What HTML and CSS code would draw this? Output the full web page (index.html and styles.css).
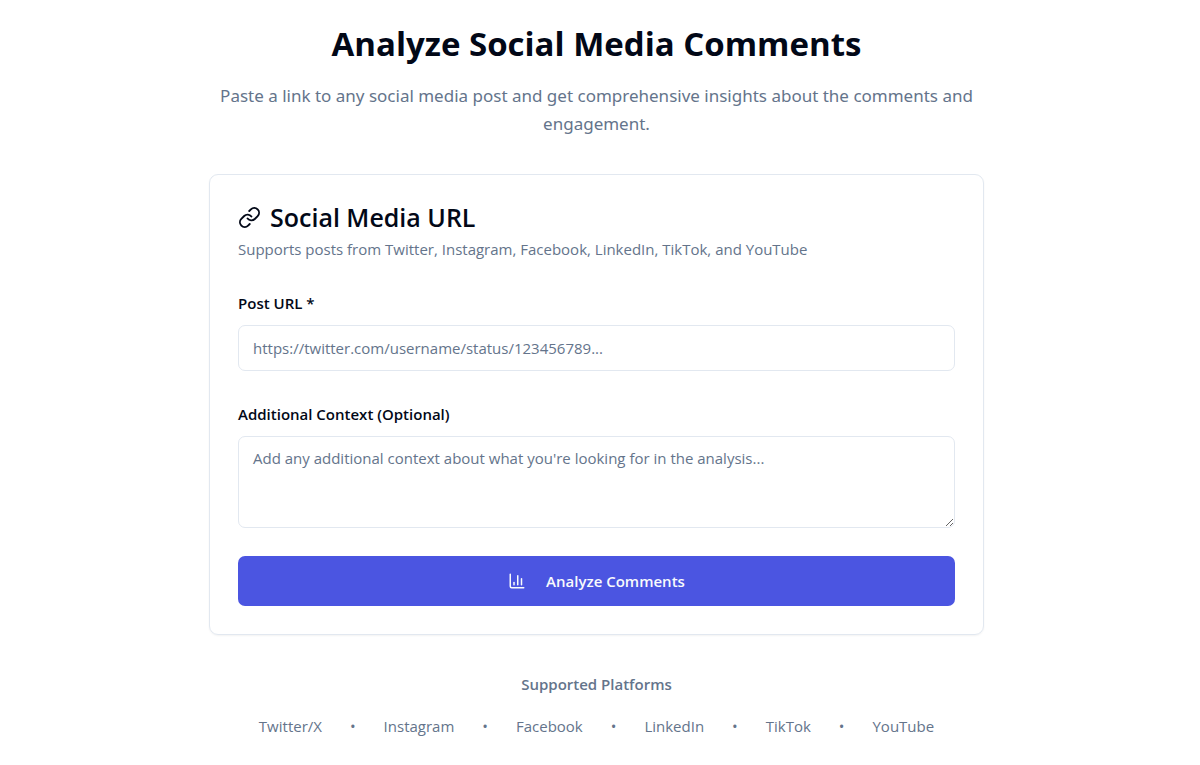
FILE: index.html
```html
<!DOCTYPE html>
<html lang="en">
<head>
  <meta charset="UTF-8" />
  <meta name="viewport" content="width=device-width, initial-scale=1.0" />
  <title>Analyze Social Media Comments</title>
  <link rel="stylesheet" href="styles.css">
</head>
<body>

  <main class="container">
    <header class="intro">
      <h1>Analyze Social Media Comments</h1>
      <p>Paste a link to any social media post and get comprehensive insights about the comments and engagement.</p>
    </header>

    <section class="card">
      <div class="card-header">
        <h2>
          <svg class="icon-link" viewBox="0 0 24 24" aria-hidden="true">
            <path d="M10 13a5 5 0 0 0 7.54.54l3-3a5 5 0 0 0-7.07-7.07l-1.72 1.71" />
            <path d="M14 11a5 5 0 0 0-7.54-.54l-3 3a5 5 0 0 0 7.07 7.07l1.71-1.71" />
          </svg>
          Social Media URL
        </h2>
        <p>Supports posts from Twitter, Instagram, Facebook, LinkedIn, TikTok, and YouTube</p>
      </div>

      <form class="form">
        <div class="field">
          <label for="url">Post URL *</label>
          <input type="url" id="url" placeholder="https://twitter.com/username/status/123456789..." required>
        </div>

        <div class="field">
          <label for="context">Additional Context (Optional)</label>
          <textarea id="context" placeholder="Add any additional context about what you're looking for in the analysis..."></textarea>
        </div>

        <button type="submit" class="btn">
          <svg class="icon-chart" viewBox="0 0 24 24" aria-hidden="true">
            <path d="M3 3v16a2 2 0 0 0 2 2h16" />
            <path d="M18 17V9" />
            <path d="M13 17V5" />
            <path d="M8 17v-3" />
          </svg>
          Analyze Comments
        </button>
      </form>
    </section>

    <footer class="platforms">
      <h3>Supported Platforms</h3>
      <div class="platform-list">
        <span>Twitter/X</span>
        <span>•</span>
        <span>Instagram</span>
        <span>•</span>
        <span>Facebook</span>
        <span>•</span>
        <span>LinkedIn</span>
        <span>•</span>
        <span>TikTok</span>
        <span>•</span>
        <span>YouTube</span>
      </div>
    </footer>
  </main>

</body>
</html>
```
FILE: styles.css
```css
* {
  box-sizing: border-box;
}
body {
  margin: 0;
  padding: 20px 27px 20px 20px;
  background: #fff;
  color: #020817;
  font-family: "Open Sans", "Noto Sans", sans-serif;
  font-size: 15px;
  line-height: 24px;
}
h1, h2, h3, p {
  margin: 0;
}
.container {
  max-width: 775px;
  margin: 0 auto;
}

/* Heading */
.intro {
  text-align: center;
  margin-bottom: 36px;
}
.intro h1 {
  font-size: 33px;
  line-height: 48px;
  font-weight: 700;
  margin-bottom: 14px;
}
.intro p {
  font-family: "Noto Sans", "Open Sans", sans-serif;
  font-size: 17px;
  line-height: 28px;
  color: #64748b;
}

/* Card */
.card {
  padding: 28px;
  border: 1px solid #e2e8f0;
  border-radius: 9px;
  box-shadow: 0 1px 2px rgba(0, 0, 0, 0.05);
}
.card-header {
  margin-bottom: 27px;
}
.card-header h2 {
  display: flex;
  align-items: center;
  gap: 9px;
  font-size: 25px;
  line-height: 28px;
  font-weight: 600;
  margin-bottom: 6px;
}
.card-header p {
  color: #64748b;
}
svg {
  fill: none;
  stroke: currentColor;
  stroke-width: 2;
  stroke-linecap: round;
  stroke-linejoin: round;
  flex-shrink: 0;
}
.icon-link {
  width: 23px;
  height: 23px;
}
.icon-chart {
  width: 18px;
  height: 18px;
}

/* Form */
.form {
  display: flex;
  flex-direction: column;
  gap: 28px;
}
.field {
  display: flex;
  flex-direction: column;
  gap: 7px;
}
.field label {
  line-height: 30px;
  font-weight: 600;
}
.field input,
.field textarea {
  width: 100%;
  padding: 9px 14px;
  border: 1px solid #e2e8f0;
  border-radius: 7px;
  background: #fff;
  color: inherit;
  font: inherit;
}
.field input {
  height: 46px;
}
.field textarea {
  display: block;
  height: 92px;
  resize: vertical;
}
.field input::placeholder,
.field textarea::placeholder {
  color: #64748b;
}
.btn {
  display: flex;
  align-items: center;
  justify-content: center;
  gap: 20px;
  height: 50px;
  border: none;
  border-radius: 7px;
  background: #4b55e1;
  color: #f8fafc;
  font: inherit;
  font-weight: 600;
  cursor: pointer;
}

/* Supported platforms */
.platforms {
  margin-top: 37px;
  text-align: center;
  color: #64748b;
}
.platforms h3 {
  font-size: 15px;
  font-weight: 600;
  margin-bottom: 18px;
}
.platform-list {
  display: flex;
  flex-wrap: wrap;
  justify-content: center;
  gap: 28px;
}
```
